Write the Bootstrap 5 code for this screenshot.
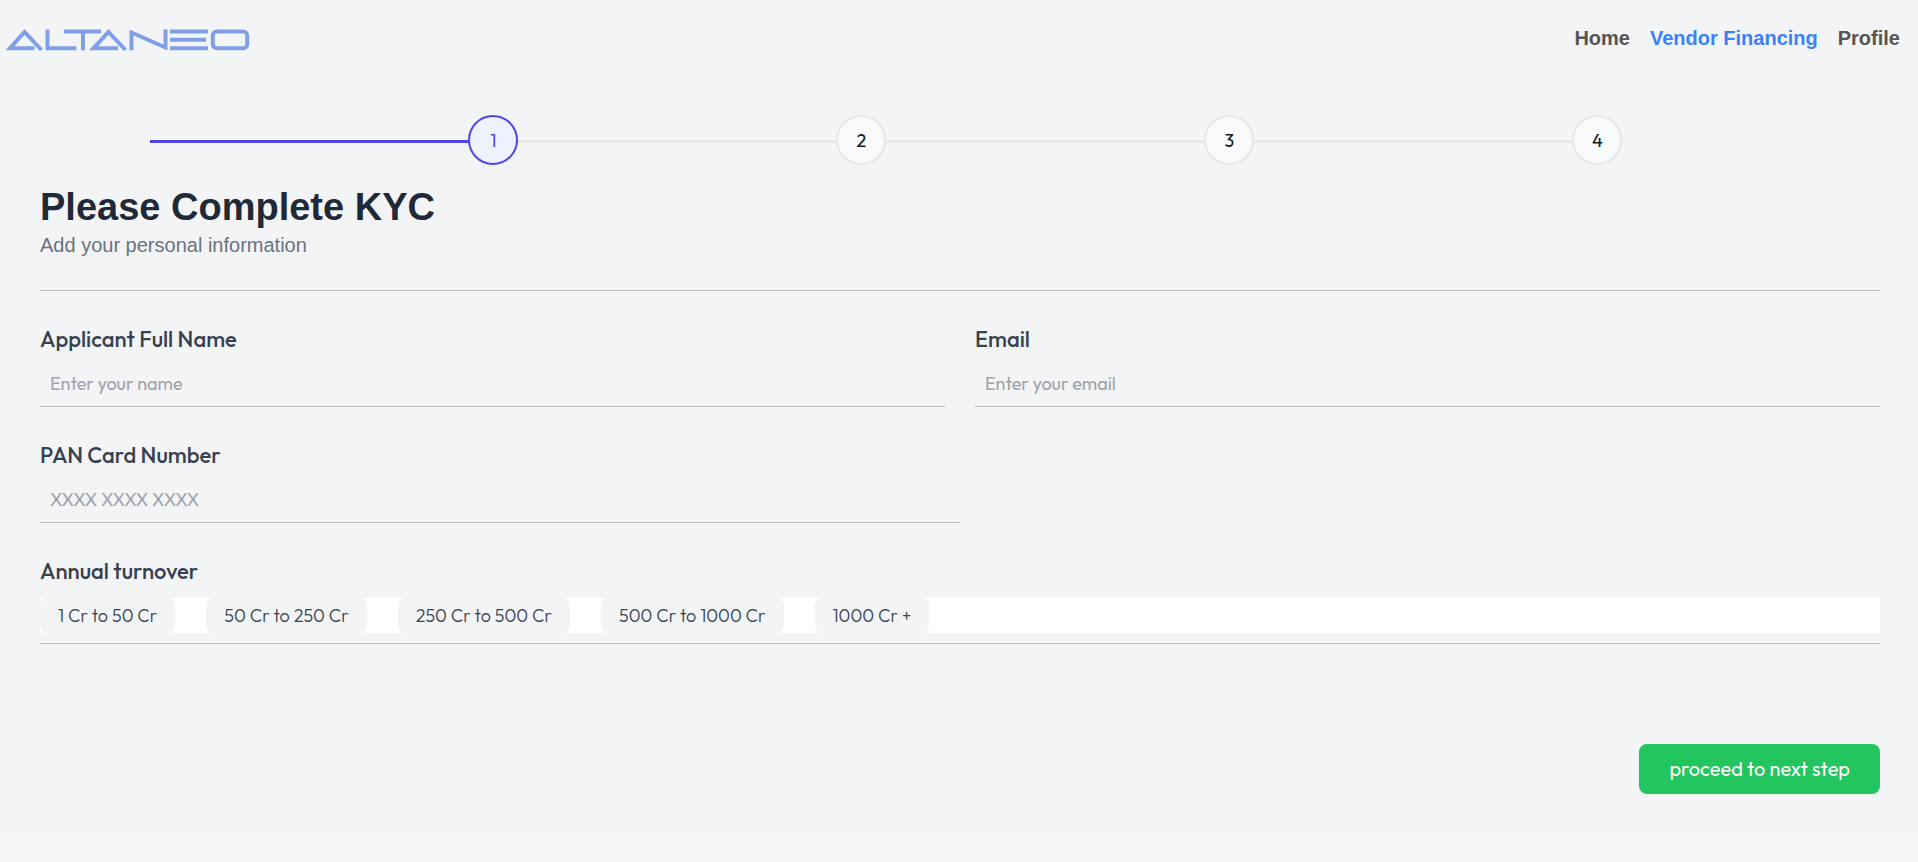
<!DOCTYPE html>
<html lang="en">
<head>
<meta charset="utf-8">
<meta name="viewport" content="width=device-width, initial-scale=1">
<title>Altaneo - Vendor Financing</title>
<link href="https://cdn.jsdelivr.net/npm/bootstrap@5.3.0/dist/css/bootstrap.min.css" rel="stylesheet">
<style>
  body { background: #f5f5f5; font-family: Outfit, Lato, sans-serif; color: #374151; }
  .page-shell { background: #f3f4f6; padding-bottom: 38px; }
  .site-nav { height: 75px; padding: 0 18px 0 6px; font-family: "Liberation Sans", Arial, sans-serif; }
  .site-nav .navbar-brand { padding: 4px 0 0; }
  .site-nav .navbar-nav { gap: 20px; }
  .site-nav .navbar-nav .nav-link { color: #555; font-size: 20px; line-height: 28px; font-weight: 700; padding: 0; }
  .site-nav .navbar-nav .nav-link.active { color: #3b82f6; }
  .kyc { padding: 40px 38px 0 40px; }
  .stepper { width: 80%; margin: 0 0 0 6%; }
  .step { height: 50px; background: linear-gradient(#e5e7eb, #e5e7eb) 0 25px / 100% 3px no-repeat; }
  .step.current { background-image: linear-gradient(#4f46e5, #4f46e5); }
  .step-dot { width: 50px; height: 50px; border: 2px solid #e5e7eb; background: #f9fafb; color: #111827; font-size: 18px; font-weight: 400; }
  .current .step-dot { border-color: #4f46e5; background: #eef2ff; color: #4f46e5; }
  .intro { font-family: "Liberation Sans", Arial, sans-serif; padding: 20px 0 29px; border-bottom: 1px solid #bbbdc1; margin-bottom: 30px; }
  .intro h1 { font-size: 38px; line-height: 44px; font-weight: 700; color: #1f2937; }
  .intro p { font-size: 20px; line-height: 32px; color: #6b7280; }
  .fields { gap: 30px; }
  .field-label { display: block; font-size: 22px; line-height: 36px; height: 38px; font-weight: 500; margin: 0; float: none; }
  .field-block { margin-bottom: 30px; }
  .line-input { height: 48px; padding: 2px 10px 0; border: 0; border-bottom: 1px solid #bbbdc1; border-radius: 0; background: transparent; font-size: 18px; font-weight: 400; color: #374151; }
  .line-input::placeholder { color: #9ca3af; opacity: 1; }
  .line-input:focus { background: transparent; box-shadow: none; border-color: #4f46e5; }
  .turnover { border-bottom: 1px solid #bbbdc1; padding-bottom: 10px; margin-bottom: 100px; }
  .chips { gap: 31px; margin-top: 7px; background: #fff; }
  .chip { border: 0; border-radius: 8px; background: #f3f4f6; color: #374151; height: 35px; padding: 0 18px; font-size: 18px; font-weight: 300; line-height: 35px; }
  .btn-proceed { height: 50px; padding: 0 30px; border: 0; border-radius: 8px; background: #22c55e; color: #fff; font-size: 20px; font-weight: 400; }
  .btn-proceed:hover { background: #16a34a; color: #fff; }
</style>
</head>
<body>
<div class="page-shell">
  <nav class="navbar navbar-expand site-nav justify-content-between" aria-label="Main">
    <a class="navbar-brand m-0 d-flex" href="#" aria-label="Altaneo">
      <svg width="244" height="24" viewBox="6 28 244 24" fill="none" stroke="#819fe6" stroke-width="4">
        <path d="M34.500 48.300H10L24.500 32L41.500 50"/>
        <path d="M47.500 29.500V48.300H76.500"/>
        <path d="M64 31.500H101M83 31.500V50.200"/>
        <path d="M118 48.300H93.500L108.500 32L125.500 50"/>
        <path d="M131.500 50.200V32.500L165.500 47.500V29.500"/>
        <path d="M170 31.500H208M170 39.800H206M170 48.300H208"/>
        <rect x="212.800" y="31.500" width="34.400" height="16.800" rx="4"/>
      </svg>
    </a>
    <div class="navbar-nav">
      <a class="nav-link" href="#">Home</a>
      <a class="nav-link active" aria-current="page" href="#">Vendor Financing</a>
      <a class="nav-link" href="#">Profile</a>
    </div>
  </nav>

  <main class="kyc">
    <ol class="stepper list-unstyled d-flex" aria-label="Progress">
      <li class="step current flex-fill d-flex justify-content-end" aria-current="step"><span class="step-dot rounded-circle d-flex align-items-center justify-content-center">1</span></li>
      <li class="step flex-fill d-flex justify-content-end"><span class="step-dot rounded-circle d-flex align-items-center justify-content-center">2</span></li>
      <li class="step flex-fill d-flex justify-content-end"><span class="step-dot rounded-circle d-flex align-items-center justify-content-center">3</span></li>
      <li class="step flex-fill d-flex justify-content-end"><span class="step-dot rounded-circle d-flex align-items-center justify-content-center">4</span></li>
    </ol>

    <header class="intro">
      <h1 class="m-0">Please Complete KYC</h1>
      <p class="m-0">Add your personal information</p>
    </header>

    <form>
      <div class="fields field-block d-flex">
        <div class="w-50">
          <label class="field-label" for="name">Applicant Full Name</label>
          <input class="form-control line-input" id="name" type="text" placeholder="Enter your name">
        </div>
        <div class="w-50">
          <label class="field-label" for="email">Email</label>
          <input class="form-control line-input" id="email" type="email" placeholder="Enter your email">
        </div>
      </div>
      <div class="field-block w-50">
        <label class="field-label" for="pan">PAN Card Number</label>
        <input class="form-control line-input" id="pan" type="text" placeholder="XXXX XXXX XXXX">
      </div>
      <fieldset class="turnover">
        <legend class="field-label">Annual turnover</legend>
        <div class="chips d-flex">
          <button class="chip" type="button">1 Cr to 50 Cr</button>
          <button class="chip" type="button">50 Cr to 250 Cr</button>
          <button class="chip" type="button">250 Cr to 500 Cr</button>
          <button class="chip" type="button">500 Cr to 1000 Cr</button>
          <button class="chip" type="button">1000 Cr +</button>
        </div>
      </fieldset>
      <div class="d-flex justify-content-end">
        <button class="btn btn-proceed" type="submit">proceed to next step</button>
      </div>
    </form>
  </main>
</div>
<script src="https://cdn.jsdelivr.net/npm/bootstrap@5.3.0/dist/js/bootstrap.bundle.min.js"></script>
</body>
</html>
